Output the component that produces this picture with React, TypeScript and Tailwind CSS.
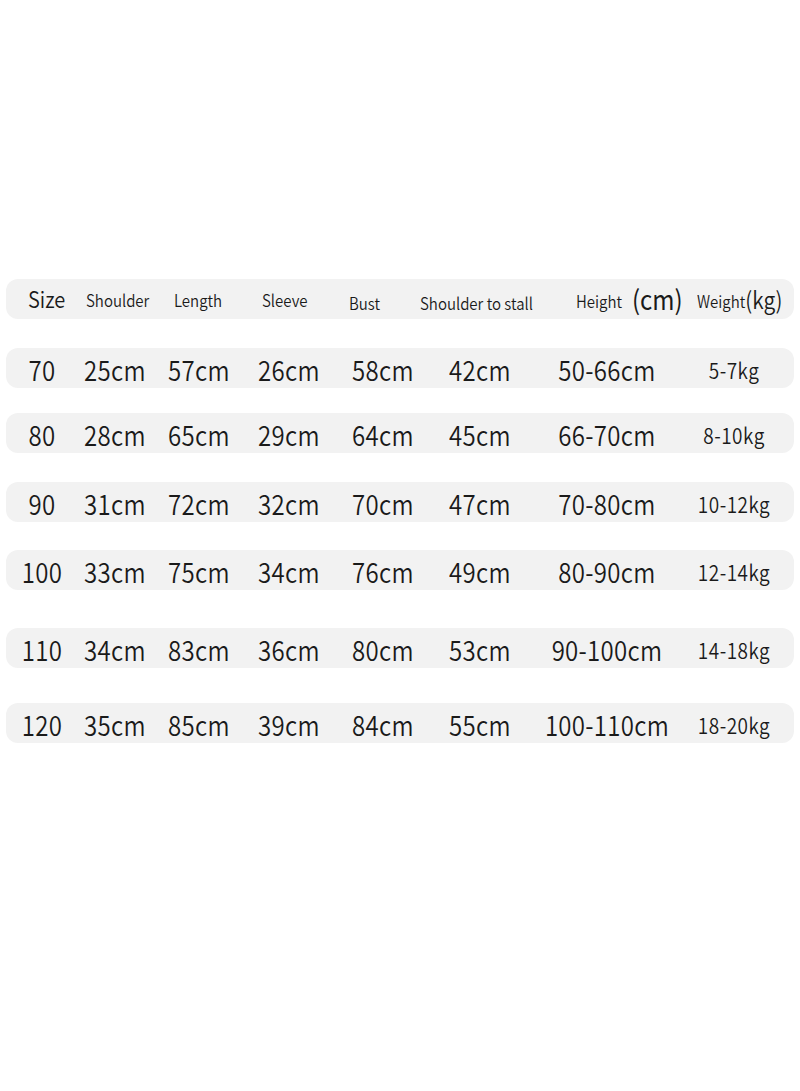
import { type FC } from 'react';

const cols = [
  'w-[70px] ml-[1px]',
  'w-[70px] ml-[3px]',
  'w-[70px] ml-[14px]',
  'w-[70px] ml-[20px]',
  'w-[70px] ml-[24px]',
  'w-[120px] ml-[2px]',
  'w-[130px] ml-[2px]',
  'w-[110px] ml-[7px]',
];

const rows = [
  { mt: 'mt-[29px]', cells: ['70', '25cm', '57cm', '26cm', '58cm', '42cm', '50-66cm', '5-7kg'] },
  { mt: 'mt-[25px]', cells: ['80', '28cm', '65cm', '29cm', '64cm', '45cm', '66-70cm', '8-10kg'] },
  { mt: 'mt-[29px]', cells: ['90', '31cm', '72cm', '32cm', '70cm', '47cm', '70-80cm', '10-12kg'] },
  { mt: 'mt-[28px]', cells: ['100', '33cm', '75cm', '34cm', '76cm', '49cm', '80-90cm', '12-14kg'] },
  { mt: 'mt-[38px]', cells: ['110', '34cm', '83cm', '36cm', '80cm', '53cm', '90-100cm', '14-18kg'] },
  { mt: 'mt-[35px]', cells: ['120', '35cm', '85cm', '39cm', '84cm', '55cm', '100-110cm', '18-20kg'] },
];

const font = { fontFamily: '"Noto Sans CJK SC", "Noto Sans", sans-serif' };

const App: FC = () => {
  return (
    <div className="flex min-h-[1091px] w-[800px] flex-col bg-white pt-[279px] font-[350] text-[#1a1a1a]" style={font}>
      {/* header */}
      <div className="mx-[6px] flex h-[40px] items-center rounded-[12px] bg-[#f2f2f2]">
        <span className="ml-[22px] w-[58px] shrink-0 scale-y-[1.12] text-[20px] leading-none">Size</span>
        <span className="w-[88px] shrink-0 scale-y-[1.12] text-[15px] leading-none">Shoulder</span>
        <span className="w-[88px] shrink-0 scale-y-[1.12] text-[15px] leading-none">Length</span>
        <span className="w-[87px] shrink-0 scale-y-[1.12] text-[15px] leading-none">Sleeve</span>
        <span className="mt-[6px] w-[71px] shrink-0 scale-y-[1.12] text-[15px] leading-none">Bust</span>
        <span className="mt-[6px] w-[156px] shrink-0 scale-y-[1.12] text-[15px] leading-none">Shoulder to stall</span>
        <span className="mt-[2px] w-[56px] shrink-0 scale-y-[1.12] text-[15px] leading-none">Height</span>
        <span className="w-[65px] shrink-0 scale-y-[1.12] text-[24px] font-normal leading-none">(cm)</span>
        <span className="mt-[2px] shrink-0 scale-y-[1.12] text-[15px] leading-none">Weight</span>
        <span className="shrink-0 scale-y-[1.12] text-[21px] leading-none">(kg)</span>
      </div>

      {rows.map((row) => (
        <div key={row.cells[0]} className={`mx-[6px] flex h-[40px] items-center rounded-[12px] bg-[#f2f2f2] ${row.mt}`}>
          {row.cells.map((c, i) => (
            <span
              key={i}
              className={`${cols[i]} mt-[2px] shrink-0 scale-y-[1.15] text-center leading-none ${
                i === 7 ? 'text-[19px] tracking-[0.5px]' : 'text-[24px] tracking-[0.3px]'
              }`}
            >
              {c}
            </span>
          ))}
        </div>
      ))}
    </div>
  );
};

export default App;
